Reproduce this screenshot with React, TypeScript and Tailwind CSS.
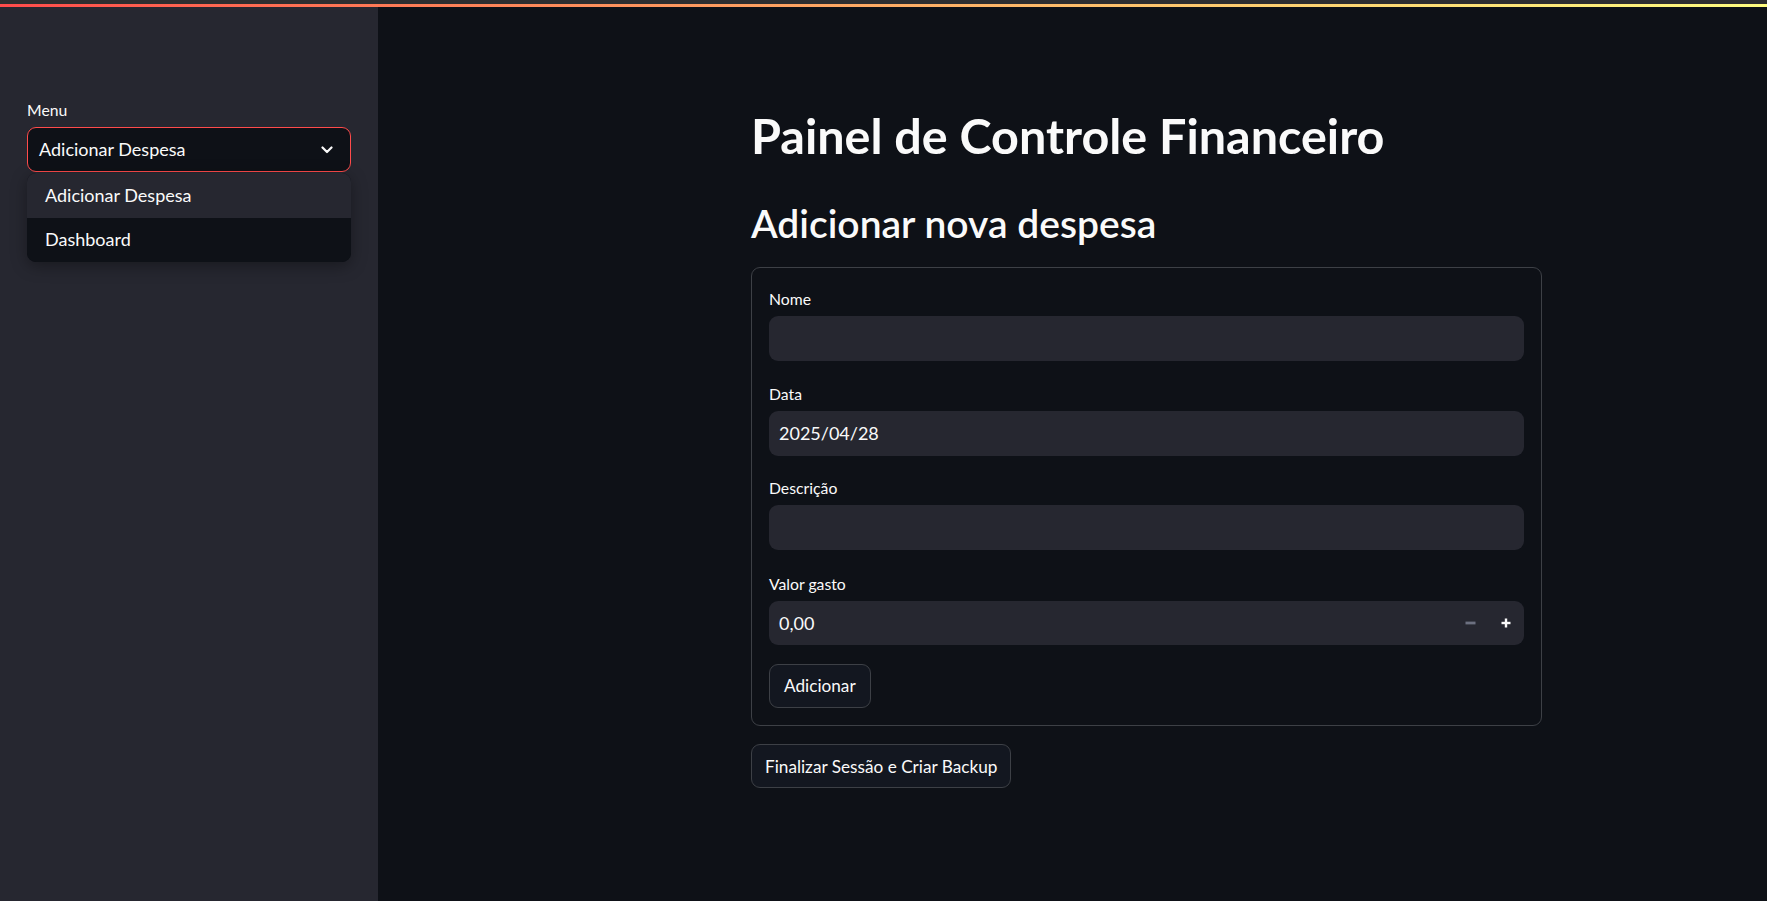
import { useState } from "react";

const font = { fontFamily: "Lato, 'Noto Sans', sans-serif" };

const Field = ({ label, value, extra }: { label: string; value?: string; extra?: string }) => {
  return (
    <div className={`flex flex-col ${extra ?? ""}`}>
      <label className="h-[27px] mb-[4px] flex items-center text-[15.75px] text-[#fafafa]">
        {label}
      </label>
      <div className="h-[45px] rounded-[9px] bg-[#262730] px-[10px] flex items-center text-[18px] text-[#fafafa]">
        {value}
      </div>
    </div>
  );
};

const App = () => {
  const [menu] = useState("Adicionar Despesa");
  const options = ["Adicionar Despesa", "Dashboard"];

  return (
    <div className="min-h-screen h-[901px] bg-[#0e1117] flex flex-col overflow-hidden" style={font}>
      {/* top decoration */}
      <div className="h-[4px] bg-[#2e2e30]"></div>
      <div className="h-[3px] bg-gradient-to-r from-[#ff4b4b] to-[#fffd80]"></div>

      <div className="flex flex-1">
        {/* Sidebar */}
        <div className="w-[378px] shrink-0 bg-[#262730] px-[27px] pt-[89px]">
          <label className="h-[27px] mb-[4px] flex items-center text-[15.75px] text-[#fafafa]">
            Menu
          </label>
          <div className="relative">
            <div className="h-[45px] rounded-[9px] border border-[#ff4b4b] bg-[#0e1117] pl-[11px] pr-[17px] flex items-center justify-between text-[18px] text-[#fafafa]">
              <span>{menu}</span>
              <svg width="12" height="8" viewBox="0 0 12 8" fill="none">
                <path d="M1.5 1.5 L6 6 L10.5 1.5" stroke="#fafafa" strokeWidth="2.2" strokeLinecap="round" strokeLinejoin="round" />
              </svg>
            </div>
            <div className="absolute left-0 right-0 top-[46px] rounded-[9px] overflow-hidden bg-[#0e1117] shadow-[0_4px_16px_rgba(0,0,0,0.35)] z-10">
              {options.map((opt, i) => (
                <div
                  key={opt}
                  className={`h-[44.5px] flex items-center px-[18px] text-[18px] text-[#fafafa] ${
                    i === 0 ? "bg-[#262730]" : "bg-[#0e1117]"
                  }`}
                >
                  {opt}
                </div>
              ))}
            </div>
          </div>
        </div>

        {/* Main */}
        <div className="flex-1 pl-[373px] pt-[99px]">
          <div className="w-[791px] flex flex-col">
            <h1 className="text-[48.5px] leading-[1.2] font-bold text-[#fafafa]">
              Painel de Controle Financeiro
            </h1>
            <h2 className="mt-[35.5px] text-[39px] leading-[1.2] font-semibold text-[#fafafa]">
              Adicionar nova despesa
            </h2>

            {/* Form */}
            <div className="mt-[21px] rounded-[9px] border border-[#3d4046] pt-[17px] px-[17px] pb-[17.5px] flex flex-col gap-[18.5px]">
              <Field label="Nome" />
              <Field label="Data" value="2025/04/28" />
              <Field label="Descrição" />
              <div className="flex flex-col mt-[1.5px]">
                <label className="h-[27px] mb-[4px] flex items-center text-[15.75px] text-[#fafafa]">
                  Valor gasto
                </label>
                <div className="h-[44px] rounded-[9px] bg-[#262730] pl-[10px] flex items-center text-[18px] text-[#fafafa]">
                  <span className="flex-1">0,00</span>
                  <div className="w-[36px] h-full flex items-center justify-center">
                    <svg width="11" height="4" viewBox="0 0 11 4">
                      <rect x="0.5" y="0.6" width="10" height="2.8" fill="#6c7080" />
                    </svg>
                  </div>
                  <div className="w-[36px] h-full flex items-center justify-center">
                    <svg width="10" height="10" viewBox="0 0 10 10">
                      <rect x="0.5" y="3.8" width="9" height="2.4" fill="#fafafa" />
                      <rect x="3.8" y="0.5" width="2.4" height="9" fill="#fafafa" />
                    </svg>
                  </div>
                </div>
              </div>
              <div>
                <button className="h-[44px] px-[14px] rounded-[9px] border border-[#3d4046] bg-[#131720] text-[17.2px] text-[#fafafa]">
                  Adicionar
                </button>
              </div>
            </div>

            <div className="mt-[18px]">
              <button className="h-[44px] px-[13px] rounded-[9px] border border-[#3d4046] bg-[#131720] text-[17.2px] text-[#fafafa]">
                Finalizar Sessão e Criar Backup
              </button>
            </div>
          </div>
        </div>
      </div>
    </div>
  );
};

export default App;
